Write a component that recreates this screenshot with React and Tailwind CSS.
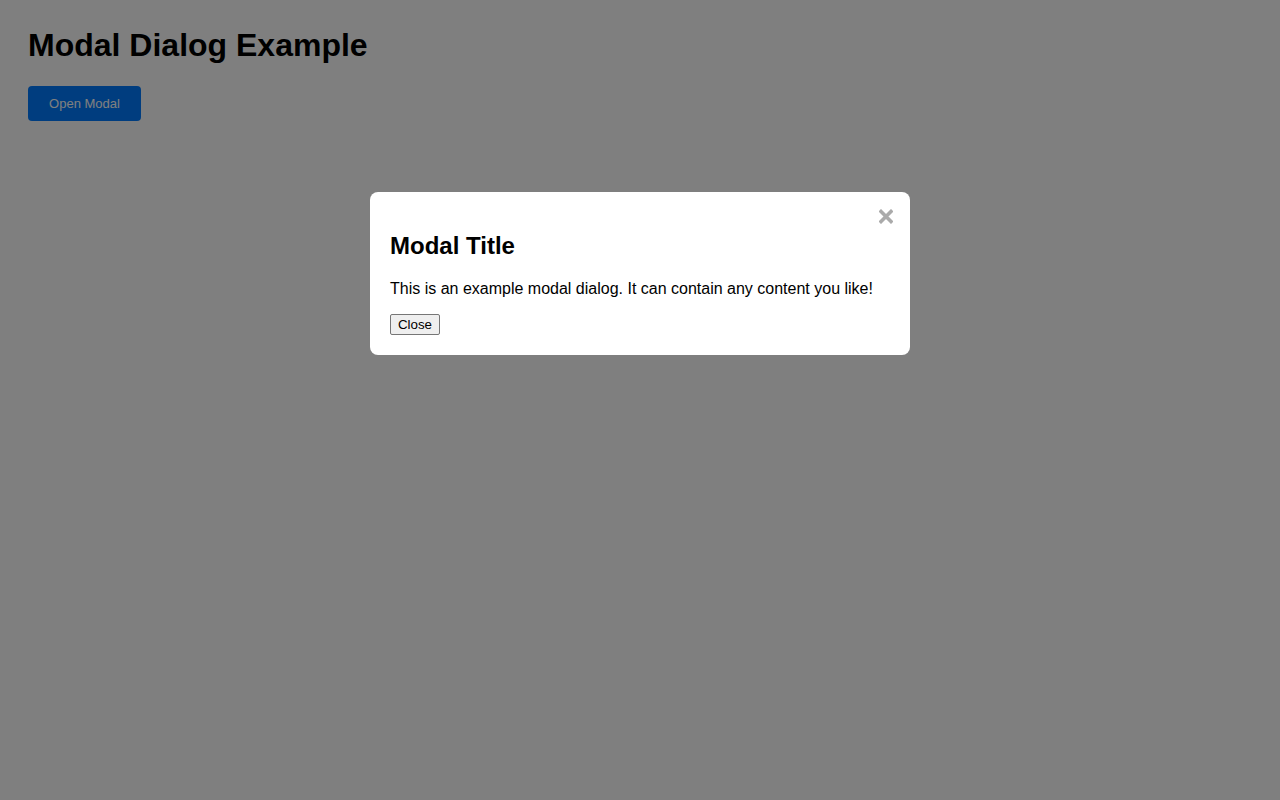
import React from "react";

export default function App() {
  const font = { fontFamily: '"Liberation Sans", Arial, sans-serif' };
  return (
    <div className="relative min-h-[800px] bg-white px-[28px] pt-[27px] text-black" style={font}>
      <h1 className="mb-[22px] text-[32px] font-bold leading-[36.8px]">Modal Dialog Example</h1>
      <button className="h-[35px] w-[113px] rounded-[4px] bg-[#007bff] text-[13px] leading-[15px] text-white">
        Open Modal
      </button>

      {/* dimmed backdrop with the dialog */}
      <div className="fixed inset-0 flex justify-center bg-black/50 pt-[192px]">
        <div className="relative h-fit w-[540px] rounded-[8px] bg-white p-[20px]">
          <span className="absolute right-[17px] top-[17px] block h-[15px] w-[14px] cursor-pointer">
            <svg width="14" height="15" viewBox="0 0 14 15">
              <path d="M2 2.5 L12 12.5 M12 2.5 L2 12.5" stroke="#aaaaaa" strokeWidth="3.6" strokeLinecap="square" />
            </svg>
          </span>
          <h2 className="mt-[20px] mb-[20px] text-[24px] font-bold leading-[27.6px]">Modal Title</h2>
          <p className="mb-[16px] text-[16px] leading-[18.4px]">
            This is an example modal dialog. It can contain any content you like!
          </p>
          <button className="block h-[21px] w-[50px] rounded-[2px] border border-[#767676] bg-[#efefef] text-[13.33px] leading-[15px] text-black">
            Close
          </button>
        </div>
      </div>
    </div>
  );
}
